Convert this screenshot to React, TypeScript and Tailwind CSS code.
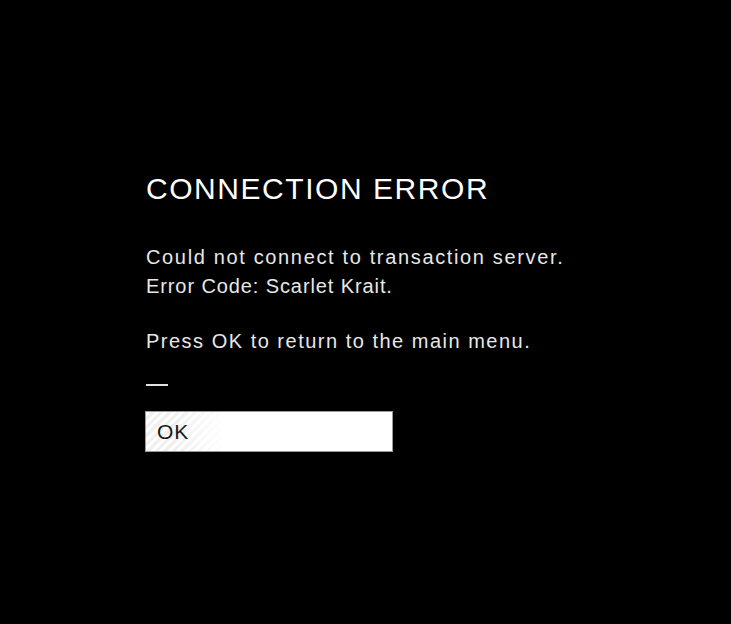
import React from "react";

export default function App() {
  return (
    <div className="w-[731px] h-[624px] bg-black overflow-hidden" style={{ fontFamily: '"Liberation Sans", Arial, sans-serif' }}>
      <div className="pl-[146px] pt-[172px] flex flex-col">
        <h1 className="text-[30px] leading-[34px] text-white tracking-[1.55px] font-normal">CONNECTION ERROR</h1>
        <div className="mt-[37px] text-[20px] leading-[29px] text-[#e8e8e8] tracking-[1.5px]">
          <p className="tracking-[1.65px]">Could not connect to transaction server.</p>
          <p className="tracking-[0.9px]">Error Code: Scarlet Krait.</p>
          <p className="mt-[26px]">Press OK to return to the main menu.</p>
        </div>
        <div className="mt-[28px] w-[22px] h-[2px] bg-[#e0e0e0]"></div>
        <button className="relative mt-[25px] -ml-px w-[248px] h-[41px] bg-white border border-[#9a9a9a] text-left pl-[11px] overflow-hidden">
          <span className="absolute inset-0 bg-[repeating-linear-gradient(-45deg,#ffffff_0px,#ffffff_3px,#f0f0f0_3px,#f0f0f0_6px)] [mask-image:linear-gradient(to_right,black_0%,black_12%,transparent_32%)]"></span>
          <span className="relative text-[21px] text-[#1a1a1a] tracking-[1px]">OK</span>
        </button>
      </div>
    </div>
  );
}
